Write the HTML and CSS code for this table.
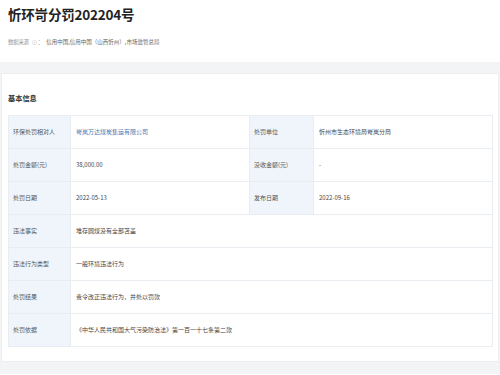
FILE: index.html
```html
<!DOCTYPE html>
<html lang="zh-CN">
<head>
<meta charset="utf-8">
<title>忻环岢分罚202204号</title>
<link rel="stylesheet" href="styles.css">
</head>
<body>
<div class="page">
  <header class="head">
    <h1 class="title">忻环岢分罚202204号</h1>
    <div class="source">
      <span class="src-label">数据来源</span>
      <svg class="info" viewBox="0 0 10 10" width="5" height="5"><circle cx="5" cy="5" r="4.3" fill="none" stroke="#c8c8c8" stroke-width="1"/><rect x="4.5" y="4" width="1" height="3.5" fill="#c8c8c8"/><rect x="4.5" y="2.3" width="1" height="1" fill="#c8c8c8"/></svg>
      <span class="src-colon">：</span>
      <span class="src-val">信用中国,信用中国（山西忻州）,市场监管总局</span>
    </div>
  </header>
  <main class="wrap">
    <section class="card">
      <h2 class="sec-title">基本信息</h2>
      <table class="info-table">
        <colgroup>
          <col class="c-label"><col class="c-val"><col class="c-label2"><col class="c-val">
        </colgroup>
        <tr>
          <th>环保处罚相对人</th><td><span class="link">岢岚万达煤炭集运有限公司</span></td>
          <th>处罚单位</th><td>忻州市生态环境局岢岚分局</td>
        </tr>
        <tr>
          <th>处罚金额(元)</th><td>38,000.00</td>
          <th>没收金额(元)</th><td>-</td>
        </tr>
        <tr>
          <th>处罚日期</th><td>2022-05-13</td>
          <th>发布日期</th><td>2022-09-16</td>
        </tr>
        <tr>
          <th>违法事实</th><td colspan="3">堆存圆煤没有全部苫盖</td>
        </tr>
        <tr>
          <th>违法行为类型</th><td colspan="3">一般环境违法行为</td>
        </tr>
        <tr>
          <th>处罚结果</th><td colspan="3">责令改正违法行为，并处以罚款</td>
        </tr>
        <tr>
          <th>处罚依据</th><td colspan="3">《中华人民共和国大气污染防治法》第一百一十七条第二款</td>
        </tr>
      </table>
    </section>
  </main>
  <div class="foot"></div>
</div>
</body>
</html>
```

FILE: styles.css
```css
* { box-sizing: border-box; }
html, body { margin: 0; padding: 0; background: #ffffff; }
body {
  font-family: "Noto Sans CJK SC", "Noto Sans", "DejaVu Sans", sans-serif;
  color: #333;
}
.page { width: 500px; height: 375px; overflow: hidden; }
.head {
  height: 62px;
  padding: 6px 8px 0 8px;
  background: #fff;
}
.title {
  margin: 0;
  font-size: 13.5px;
  line-height: 16px;
  font-weight: 700;
  color: #222;
  letter-spacing: -0.2px;
}
.source {
  margin-top: 16px;
  display: flex;
  align-items: center;
  height: 8px;
  font-size: 5.5px;
  line-height: 8px;
  color: #777;
}
.src-label { color: #999; letter-spacing: -0.3px; }
.info { margin: 0 1px 0 3px; }
.src-colon { color: #777; margin-right: 3px; }
.src-val { color: #666; }
.wrap {
  background: #f3f4f5;
  padding: 11px 1px 12px 1px;
}
.card {
  background: #fff;
  border: 1px solid #eceef0;
  padding: 19px 6px 14px 6px;
}
.sec-title {
  margin: 0 0 12px 0;
  font-size: 7.2px;
  line-height: 10px;
  font-weight: 700;
  color: #333;
}
.info-table {
  width: 484px;
  border-collapse: collapse;
  table-layout: fixed;
  font-size: 6px;
}
.c-label { width: 62px; }
.c-label2 { width: 64px; }
.c-val { width: 179px; }
.info-table th, .info-table td {
  height: 33px;
  border: 1px solid #e9edf1;
  font-weight: 400;
  text-align: left;
  vertical-align: middle;
  white-space: nowrap;
  line-height: 8px;
}
.info-table th {
  background: #eff5fb;
  color: #555;
  padding: 0 0 0 4px;
}
.info-table td {
  color: #444;
  padding: 0 0 0 5px;
  background: #fff;
}
.link { color: #3f79b4; }
.foot { height: 2px; background: #fff; }
```
